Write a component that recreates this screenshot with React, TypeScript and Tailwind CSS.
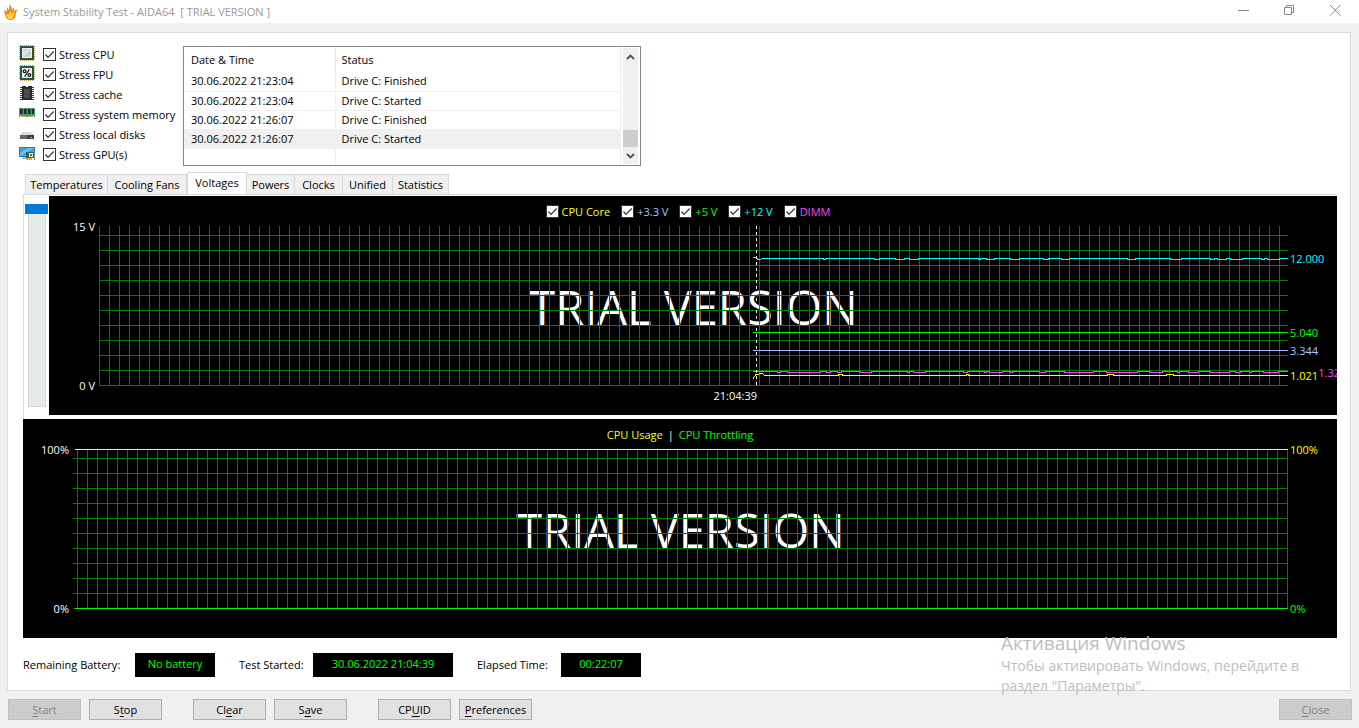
import React from "react";

type TestItem = { id: string; label: string; icon: React.ReactNode };

const pins = [1, 3, 5, 7, 9, 11, 13];

function Chip({ children }: { children?: React.ReactNode }) {
  return (
    <svg width="16" height="16" viewBox="0 0 16 16" shapeRendering="crispEdges" aria-hidden="true">
      {pins.map((p) => (
        <g key={p} fill="#b9a35a">
          <rect x={p} y="0" width="1" height="1" />
          <rect x={p} y="15" width="1" height="1" />
          <rect x="0" y={p} width="1" height="1" />
          <rect x="15" y={p} width="1" height="1" />
        </g>
      ))}
      <rect x="1" y="1" width="14" height="14" fill="#24573f" />
      <rect x="3" y="3" width="10" height="10" fill="#eef2ef" />
      {children}
    </svg>
  );
}

const tests: TestItem[] = [
  {
    id: "cpu",
    label: "Stress CPU",
    icon: (
      <Chip>
        <rect x="4" y="4" width="8" height="8" fill="#cdd3cf" />
        <path d="M4 12V7l5-3h3z" fill="#dde1de" />
      </Chip>
    ),
  },
  {
    id: "fpu",
    label: "Stress FPU",
    icon: (
      <Chip>
        <g fill="none" stroke="#151515" strokeWidth="1.2" shapeRendering="auto">
          <circle cx="5.6" cy="6.2" r="1.4" />
          <circle cx="10.4" cy="10" r="1.4" />
          <path d="M10.3 4.400L5.700 11.800" />
        </g>
      </Chip>
    ),
  },
  {
    id: "cache",
    label: "Stress cache",
    icon: (
      <svg width="16" height="16" viewBox="0 0 16 16" shapeRendering="crispEdges" aria-hidden="true">
        {[2, 4, 6, 8, 10, 12, 14].map((y) => (
          <g key={y} fill="#3b3b3b">
            <rect x="1" y={y} width="3" height="1" />
            <rect x="12" y={y} width="3" height="1" />
          </g>
        ))}
        <path d="M3 1h4v1h2V1h4v14H3z" fill="#2b2b2e" />
        <path d="M5 4h6v9H5z" fill="#4c4c50" />
      </svg>
    ),
  },
  {
    id: "memory",
    label: "Stress system memory",
    icon: (
      <svg width="16" height="16" viewBox="0 0 16 16" shapeRendering="crispEdges" aria-hidden="true">
        <path d="M0 3h16v8H0z" fill="#4a9a70" />
        <path d="M1 4h2v5H1zM5 4h2v5H5zM9 4h2v5H9zM13 4h2v5h-2z" fill="#1d2b25" />
        <path d="M3 4h1v5H3zM7 4h1v5H7zM11 4h1v5h-1z" fill="#275c42" />
        <path d="M2 11h5v1H2zM9 11h5v1H9z" fill="#e0a85c" />
        <path d="M0 10h1v2H0zM15 10h1v2h-1zM7 10h2v2H7z" fill="#4f9c72" />
      </svg>
    ),
  },
  {
    id: "disks",
    label: "Stress local disks",
    icon: (
      <svg width="16" height="16" viewBox="0 0 16 16" aria-hidden="true">
        <path d="M3 7h10l2 3H1z" fill="#dcdcdc" />
        <path d="M1 10h14v4H1z" fill="#3b3b3b" />
        <path d="M1 10h7l1 4H1z" fill="#666" />
        <path d="M11 12h2v1h-2z" fill="#5fe08a" />
      </svg>
    ),
  },
  {
    id: "gpu",
    label: "Stress GPU(s)",
    icon: (
      <svg width="16" height="16" viewBox="0 0 16 16" shapeRendering="crispEdges" aria-hidden="true">
        <path d="M0 2h16v10H0z" fill="#1f7fc4" />
        <path d="M1 3h14v8H1z" fill="#3fa2e6" />
        <path d="M1 11V8l9-5h5z" fill="#6cc0f5" />
        <path d="M4 12h4v2H3v-1h1z" fill="#9bb4c4" />
        <path d="M7 7h9v6H7z" fill="#2c6b4a" />
        <path d="M10 8h4v4h-4z" fill="#d7e6dc" />
        <path d="M11 9h2v2h-2z" fill="#4d8768" />
        <path d="M7 13h6v2H7z" fill="#e3a63c" />
        <path d="M15 6h1v9h-1z" fill="#7c8a82" />
      </svg>
    ),
  },
];

const log = [
  ["30.06.2022 21:23:04", "Drive C: Finished"],
  ["30.06.2022 21:23:04", "Drive C: Started"],
  ["30.06.2022 21:26:07", "Drive C: Finished"],
  ["30.06.2022 21:26:07", "Drive C: Started"],
];

const tabs = [
  { name: "Temperatures", width: "w-[83px]" },
  { name: "Cooling Fans", width: "w-[79px]" },
  { name: "Voltages", width: "w-[60px]" },
  { name: "Powers", width: "w-[48px]" },
  { name: "Clocks", width: "w-[48px]" },
  { name: "Unified", width: "w-[50px]" },
  { name: "Statistics", width: "w-[56px]" },
];

const voltages = [
  { id: "core", label: "CPU Core", text: "text-[#ffff00]" },
  { id: "v33", label: "+3.3 V", text: "text-[#a8c8ff]" },
  { id: "v5", label: "+5 V", text: "text-[#00ff00]" },
  { id: "v12", label: "+12 V", text: "text-[#00ffff]" },
  { id: "dimm", label: "DIMM", text: "text-[#ff40ff]" },
];

const readings = [
  { value: 12, label: "12.000", style: "text-[#00ffff] left-0.5" },
  { value: 5.04, label: "5.040", style: "text-[#00ff00] left-0.5" },
  { value: 3.344, label: "3.344", style: "text-[#a8c8ff] left-0.5" },
  { value: 1.021, label: "1.021", style: "text-[#ffff00] left-0.5" },
  { value: 1.32, label: "1.32", style: "text-[#ff40ff] right-[-3px]" },
];

const PLOT_HEIGHT = 160;
const SPAN = 532;

// Step line that flickers one pixel away from its base level.
function flicker(base: number, delta: number, chance: number, seed: number, lead: string) {
  let s = seed;
  let d = lead;
  let x = -SPAN + 9;
  while (x < 0) {
    s = (s * 1103515245 + 12345) % 2147483648;
    const off = s / 2147483648 < chance;
    s = (s * 1103515245 + 12345) % 2147483648;
    const r = s / 2147483648;
    const len = off ? 1 + Math.floor(r * r * 10) : 2 + Math.floor(r * r * 16);
    const y = off ? base + delta : base;
    const end = Math.min(0, x + len);
    d += ` L${x} ${y} L${end} ${y}`;
    x = end + 1;
  }
  return d;
}

function Check({ id, label, className = "" }: { id: string; label: string; className?: string }) {
  return (
    <span className={`flex items-center gap-[3px] ${className}`}>
      <span className="grid">
        <input
          id={id}
          type="checkbox"
          defaultChecked
          className="peer [grid-area:1/1] size-[13px] appearance-none border border-[#333] bg-white"
        />
        <svg
          viewBox="0 0 13 13"
          className="pointer-events-none invisible [grid-area:1/1] size-[13px] peer-checked:visible"
          aria-hidden="true"
        >
          <path d="M2.500 6.500L5 9.300L10.700 3.500" fill="none" stroke="#333" strokeWidth="1.2" />
        </svg>
      </span>
      <label htmlFor={id} className="whitespace-nowrap">
        {label}
      </label>
    </span>
  );
}

function Plot({ id, offset, children }: { id: string; offset: number; children?: React.ReactNode }) {
  return (
    <svg width="100%" height={PLOT_HEIGHT} className="overflow-visible">
      <defs>
        <pattern id={id} x={offset} y="9" width="10" height="15" patternUnits="userSpaceOnUse">
          <rect width="1" height="15" fill="#008000" />
          <rect width="10" height="1" fill="#008000" />
        </pattern>
      </defs>
      <text x="50%" y="99" textAnchor="middle" fill="#fff" className="text-[47px]">
        TRIAL VERSION
      </text>
      <rect width="100%" height={PLOT_HEIGHT} fill={`url(#${id})`} />
      {children}
    </svg>
  );
}

function Key({ text, disabled = false }: { text: string; disabled?: boolean }) {
  const [before, hot, after] = text.split("_");
  return (
    <button
      type="button"
      disabled={disabled}
      className="h-[21px] w-[73px] border border-[#adadad] bg-[#e1e1e1] leading-[18px] disabled:border-[#bfbfbf] disabled:bg-[#ccc] disabled:text-[#838383]"
    >
      {before}
      <span className="underline underline-offset-2">{hot}</span>
      {after}
    </button>
  );
}

function Readout({
  label,
  value,
  labelWidth,
  width,
}: {
  label: string;
  value: string;
  labelWidth: string;
  width: string;
}) {
  return (
    <div className="flex items-center">
      <span className={`whitespace-nowrap ${labelWidth}`}>{label}</span>
      <output className={`h-6 bg-black text-center leading-[22px] text-[#00ff00] ${width}`}>{value}</output>
    </div>
  );
}

export default function App() {
  return (
    <div className="relative flex min-h-screen flex-col overflow-hidden bg-[#f0f0f0] font-['Open_Sans','Noto_Sans',sans-serif] text-[11px] leading-4 text-black">
      <header className="flex h-[23px] items-center bg-white pl-1 text-[#999]">
        <svg width="13" height="16" viewBox="0 0 13 16" aria-hidden="true">
          <path
            d="M5 0c2 2 3 4 3 6l2-3c0 2 0 3-.4 4.500L13 5c0 2-.8 3-1.200 5 0 4-2.500 6-5.300 6S1.500 14 1.300 11.500C1 9.500.3 8 0 6c1 .3 2 1 2.700 2C3 6 3 5 2.500 3c1 .7 2 2 2.300 3.500C5.500 4.500 5.500 2.500 5 0z"
            fill="#f58220"
          />
          <path
            d="M6.500 6c.6 1.500 1 2.500 1 3.500L10.500 8c-.3 3-1 7.300-4.300 7.300-2.500 0-3.900-2.300-4.200-5.800l2.300 1C5.500 9.500 6.300 8 6.500 6z"
            fill="#ffd23c"
          />
        </svg>
        <h1 className="ml-[6px] whitespace-pre">System Stability Test - AIDA64  [ TRIAL VERSION ]</h1>
        <div className="mr-[13px] ml-auto flex h-full items-center gap-[25px] pb-[3px]">
          {[
            { name: "Minimize", d: "M5 10.500h11" },
            { name: "Restore", d: "M5.500 7.500h7v7h-7zM7.500 7.500v-2h7v7h-2" },
            { name: "Close window", d: "M5 5l10.500 10.500M15.500 5L5 15.500" },
          ].map((b) => (
            <button key={b.name} type="button" aria-label={b.name}>
              <svg width="21" height="20" viewBox="0 0 21 20" fill="none" stroke="#888" aria-hidden="true">
                <path d={b.d} />
              </svg>
            </button>
          ))}
        </div>
      </header>

      <main className="mt-[9px] mr-2 ml-[7px] flex flex-col border border-[#dcdcdc] bg-white pt-3 pr-[13px] pb-[13px] pl-[15px]">
        <section className="flex gap-1.5">
          <ul className="-ml-1 w-[158px] shrink-0">
            {tests.map((t) => (
              <li key={t.id} className="flex h-5 gap-2">
                {t.icon}
                <Check id={t.id} label={t.label} className="pb-px" />
              </li>
            ))}
          </ul>
          <div className="mt-px flex h-[120px] w-[458px] border border-[#828790] bg-white pr-0.5">
            <div className="flex-1 overflow-hidden">
              <table className="w-full table-fixed border-collapse text-left">
                <thead>
                  <tr className="h-[25px]">
                    <th className="w-[151px] border-r border-[#e5e5e5] pl-[7px] font-normal">Date &amp; Time</th>
                    <th className="border-r border-[#e5e5e5] pl-1.5 font-normal">Status</th>
                  </tr>
                </thead>
                <tbody>
                  {log.map(([time, status], i) => (
                    <tr
                      key={i}
                      className={`h-[19px] border-b border-[#f0f0f0] ${i === 3 ? "bg-[#f0f0f0]" : ""}`}
                    >
                      <td className="border-r border-[#f0f0f0] py-0 pl-[7px]">{time}</td>
                      <td className="border-r border-[#f0f0f0] py-0 pl-1.5">{status}</td>
                    </tr>
                  ))}
                  <tr className="h-[19px]">
                    <td className="border-r border-[#f0f0f0]" />
                    <td className="border-r border-[#f0f0f0]" />
                  </tr>
                </tbody>
              </table>
            </div>
            <div className="my-px ml-0.5 flex w-[15px] flex-col items-center justify-between bg-[#f0f0f0]">
              <button type="button" aria-label="Scroll up" className="flex h-[17px] items-center">
                <svg width="9" height="6" viewBox="0 0 9 6" fill="none" stroke="#505050" strokeWidth="1.800" aria-hidden="true">
                  <path d="M1 5l3.500-3.500L8 5" />
                </svg>
              </button>
              <div className="mt-auto h-[17px] w-full bg-[#cdcdcd]" />
              <button type="button" aria-label="Scroll down" className="flex h-[17px] items-center">
                <svg width="9" height="6" viewBox="0 0 9 6" fill="none" stroke="#505050" strokeWidth="1.800" aria-hidden="true">
                  <path d="M1 1l3.500 3.500L8 1" />
                </svg>
              </button>
            </div>
          </div>
        </section>

        <nav role="tablist" className="mt-1.5 flex items-end pl-0.5">
          {tabs.map((t) =>
            t.name === "Voltages" ? (
              <button
                key={t.name}
                type="button"
                role="tab"
                aria-selected="true"
                className={`h-[22px] border border-b-0 border-[#d9d9d9] bg-white pb-0.5 ${t.width}`}
              >
                {t.name}
              </button>
            ) : (
              <button
                key={t.name}
                type="button"
                role="tab"
                aria-selected="false"
                className={`h-5 border-t border-r border-[#d9d9d9] bg-[#f0f0f0] whitespace-nowrap first:border-l ${t.width}`}
              >
                {t.name}
              </button>
            ),
          )}
        </nav>

        <section className="flex border-t border-l border-[#dcdcdc] pt-px pb-1">
          <div className="grid w-[25px] shrink-0 justify-items-center self-start pt-2 pr-px pl-px">
            <div className="[grid-area:1/1] h-[203px] w-[18px] border border-[#d6d6d6] bg-[#e7eaea]" />
            <input
              type="range"
              aria-label="Time scale"
              min="0"
              max="100"
              defaultValue="0"
              className="[grid-area:1/1] m-0 block h-[203px] w-[23px] appearance-none bg-transparent p-0 [writing-mode:vertical-lr] [&::-webkit-slider-thumb]:h-[10px] [&::-webkit-slider-thumb]:w-[23px] [&::-webkit-slider-thumb]:appearance-none [&::-webkit-slider-thumb]:bg-[#0078d7]"
            />
          </div>
          <div className="grid min-w-0 flex-1 grid-cols-[50px_1fr_49px] grid-rows-[30px_160px_29px] overflow-hidden bg-black text-white">
            <div className="col-span-3 flex items-center justify-center gap-[11px] pt-px pr-2.5">
              {voltages.map((v) => (
                <Check key={v.id} id={v.id} label={v.label} className={v.text} />
              ))}
            </div>
            <div className="-my-2 flex flex-col justify-between pt-px pr-1 text-right">
              <span>15 V</span>
              <span>0 V</span>
            </div>
            <Plot id="voltageGrid" offset={0}>
              <svg x="100%" className="overflow-visible" fill="none" shapeRendering="crispEdges">
                <path
                  d={flicker(32.5, 1, 0.4, 77, `M${-SPAN - 3} 31.500 L${-SPAN} 31.500 L${-SPAN + 2} 33.500`)}
                  stroke="#00ffff"
                />
                <path d={`M${-SPAN - 3} 106.500H0`} stroke="#00ff00" />
                <path d={`M${-SPAN - 3} 124.500H0`} stroke="#a8b8ff" />
                <path d={flicker(145.5, 1, 0.55, 31, `M${-SPAN - 3} 145.500 L${-SPAN} 145.500`)} stroke="#ff40ff" />
                <path
                  d={flicker(149.5, -1, 0.1, 9, `M${-SPAN - 3} 152.500 L${-SPAN} 148.500 L${-SPAN + 6} 147.500`)}
                  stroke="#ffff00"
                />
                <path d={`M${-SPAN + 0.5} 0V160`} stroke="#fff" strokeDasharray="3 3" />
                <text x={-SPAN + 1} y="174" textAnchor="end" fill="#fff">
                  21:04:39
                </text>
              </svg>
            </Plot>
            <div className="relative">
              {readings.map((r) => (
                <span
                  key={r.label}
                  className={`absolute -translate-y-1/2 ${r.style}`}
                  style={{ top: Math.round(PLOT_HEIGHT * (1 - r.value / 15)) + 1 }}
                >
                  {r.label}
                </span>
              ))}
            </div>
          </div>
        </section>

        <section className="grid grid-cols-[50px_1fr_49px] grid-rows-[30px_160px_29px] bg-black text-white">
          <div className="col-span-3 flex items-center justify-center gap-[5px] pt-0.5">
            <span className="text-[#ffff00]">CPU Usage</span>
            <span>|</span>
            <span className="text-[#00ff00]">CPU Throttling</span>
          </div>
          <div className="-my-2 flex flex-col justify-between pt-px pr-1 text-right">
            <span>100%</span>
            <span>0%</span>
          </div>
          <Plot id="usageGrid" offset={4}>
            <svg width="100%" height={PLOT_HEIGHT} shapeRendering="crispEdges">
              <line x1="2" x2="100%" y1="0.5" y2="0.5" stroke="#ffff00" />
              <line x1="2" x2="100%" y1="159.5" y2="159.5" stroke="#00ff00" />
            </svg>
          </Plot>
          <div className="-my-2 flex flex-col justify-between pt-px pl-0.5">
            <span className="text-[#ffff00]">100%</span>
            <span className="text-[#00ff00]">0%</span>
          </div>
        </section>

        <section className="mt-[15px] flex gap-6">
          <Readout label="Remaining Battery:" value="No battery" labelWidth="w-28" width="w-20" />
          <Readout label="Test Started:" value="30.06.2022 21:04:39" labelWidth="w-[74px]" width="w-[140px]" />
          <Readout label="Elapsed Time:" value="00:22:07" labelWidth="w-[84px]" width="w-20" />
        </section>
      </main>

      <footer className="mt-2 mr-[7px] ml-2 flex gap-[31px]">
        <div className="flex gap-2">
          <Key text="_S_tart" disabled />
          <Key text="S_t_op" />
        </div>
        <div className="flex gap-2">
          <Key text="Cl_e_ar" />
          <Key text="S_a_ve" />
        </div>
        <div className="flex gap-2">
          <Key text="CP_U_ID" />
          <Key text="_P_references" />
        </div>
        <div className="ml-auto">
          <Key text="_C_lose" disabled />
        </div>
      </footer>

      <aside className="pointer-events-none absolute right-12 bottom-8 w-[310px] text-[14px] leading-5 text-[#bdbdbd]">
        <p className="text-[19px] leading-[26px]">Активация Windows</p>
        <p>Чтобы активировать Windows, перейдите в раздел "Параметры".</p>
      </aside>
    </div>
  );
}
